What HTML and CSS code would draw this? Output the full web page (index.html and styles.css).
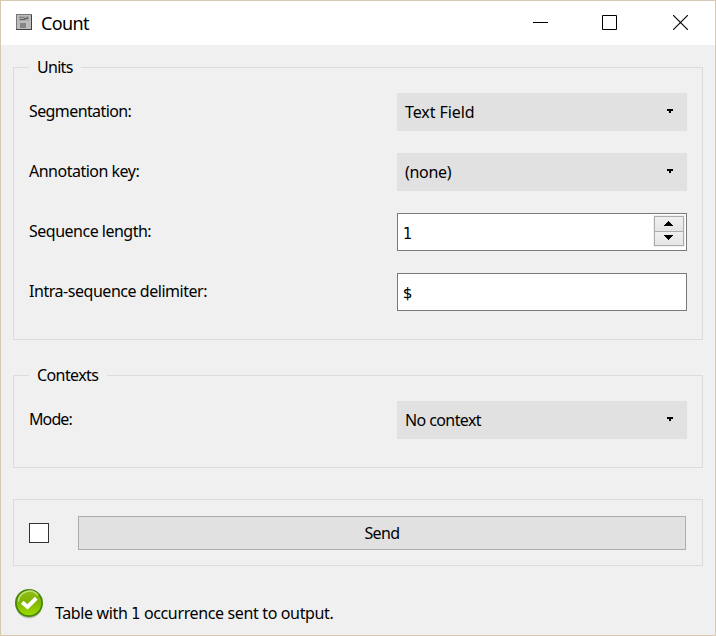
FILE: index.html
```html
<!DOCTYPE html>
<html lang="en">
<head>
<meta charset="utf-8">
<title>Count</title>
<link rel="stylesheet" href="styles.css">
</head>
<body>
<div class="window">
  <header class="titlebar">
    <svg class="app-icon" width="16" height="16" shape-rendering="crispEdges"><path fill="#414141" d="M0 0h16v16H0z"/><path fill="#777" d="M0 0h16v1H0zM0 0h1v15H0z"/><path fill="#bcbcbc" d="M1 1h14v14H1z"/><path fill="#a8a8a8" d="M3 2h10v5H3z"/><path fill="#858585" d="M4 9h6v5H4zM3 3h5v1H3z"/><path fill="#5c5c5c" d="M4 5h4V4h3V3h1v2H9v1H4z"/></svg>
    <h1 class="title">Count</h1>
    <div class="window-controls">
      <svg width="15" height="15" shape-rendering="crispEdges"><path fill="#000" d="M0 7h15v1H0z"/></svg>
      <svg width="15" height="15"><path fill="none" stroke="#000" d="M.5.5h14v14H.5z"/></svg>
      <svg width="15" height="15"><path fill="none" stroke="#000" stroke-width="1.1" d="M0 0l15 15M15 0L0 15"/></svg>
    </div>
  </header>
  <main class="content">
    <section class="group units">
      <h2 class="legend legend-units">Units</h2>
      <div class="row"><span class="label l-seg">Segmentation:</span><div class="select"><span class="v-text">Text Field</span><i class="caret"></i></div></div>
      <div class="row"><span class="label">Annotation key:</span><div class="select"><span class="v-none">(none)</span><i class="caret"></i></div></div>
      <div class="row"><span class="label">Sequence length:</span><div class="field"><span class="digit">1</span>
        <div class="spinner">
          <span class="step"><svg width="9" height="5" shape-rendering="crispEdges"><path d="M4 0h1v1h1v1h1v1h1v1h1v1H0V4h1V3h1V2h1V1h1z"/></svg></span>
          <span class="step"><svg width="9" height="5" shape-rendering="crispEdges"><path d="M0 0h9v1H8v1H7v1H6v1H5v1H4V4H3V3H2V2H1V1H0z"/></svg></span>
        </div></div></div>
      <div class="row"><span class="label l-intra">Intra-sequence delimiter:</span><div class="field"><span>$</span></div></div>
    </section>
    <section class="group contexts">
      <h2 class="legend legend-contexts">Contexts</h2>
      <div class="row"><span class="label l-mode">Mode:</span><div class="select"><span class="v-context">No context</span><i class="caret"></i></div></div>
    </section>
    <section class="group send">
      <span class="checkbox"></span>
      <button class="send-button">Send</button>
    </section>
    <footer class="status">
      <svg width="30" height="32" viewBox="0 0 30 32">
        <defs><linearGradient id="green" x2="0" y2="1"><stop offset="0" stop-color="#8fbd18"/><stop offset=".45" stop-color="#80b400"/><stop offset="1" stop-color="#9ddd00"/></linearGradient></defs>
        <ellipse cx="14" cy="18" rx="13" ry="12.5" fill="#000" opacity=".2"/>
        <circle cx="14" cy="15" r="13.1" fill="url(#green)" stroke="#458900" stroke-width="1.8"/>
        <path d="M3.4 13.8A11 11 0 0 1 23 7.3" fill="none" stroke="#c4dd83" stroke-width="1.5"/>
        <path d="M7.2 14.3l5.3 4.6 8.8-8.6" fill="none" stroke="#fff" stroke-width="4"/>
      </svg>
      <span class="status-text">Table with <span class="digit">1</span> occurrence sent to output.</span>
    </footer>
  </main>
</div>
</body>
</html>
```

FILE: styles.css
```css
* { box-sizing: border-box; }
body {
  margin: 0;
  font: 16px/20px "Noto Sans", sans-serif;
  color: #000;
}
.window {
  width: 716px;
  height: 636px;
  border: 1px solid #d9c9b3;
  border-right-color: #d4cab6;
  background: #f0f0f0;
  overflow: hidden;
}
.titlebar {
  display: flex;
  align-items: center;
  height: 44px;
  padding: 0 27px 0 15px;
  background: #fff;
}
.app-icon { margin-bottom: 2px; }
.title {
  margin: 0 0 0 9px;
  font-size: 18px;
  font-weight: 400;
  letter-spacing: -.65px;
}
.window-controls {
  display: flex;
  gap: 55px;
  margin: 0 0 1px auto;
}
.window-controls svg:first-child { margin-right: -1px; }
.window-controls svg:last-child { margin-left: 1px; }
.content { padding: 22px 12px 0; }
.group { border: 1px solid #dcdcdc; }
.units { height: 273px; padding: 0 15px; }
.contexts { height: 93px; margin-top: 35px; padding: 0 15px; }
.legend {
  width: max-content;
  height: 20px;
  margin: -11px 0 16px;
  padding: 0 8px;
  background: #f0f0f0;
  font-size: 16px;
  font-weight: 400;
  line-height: 20px;
  white-space: nowrap;
}
.legend-units { width: 52px; letter-spacing: -.7px; }
.legend-contexts { width: 78px; letter-spacing: -.6px; }
.row {
  display: grid;
  grid-template-columns: 368px 290px;
  grid-template-rows: 38px;
  height: 38px;
  margin-bottom: 22px;
  letter-spacing: -.5px;
}
.label { padding-top: 8px; white-space: nowrap; }
.select {
  display: flex;
  align-items: center;
  justify-content: space-between;
  padding: 0 14px 0 8px;
  background: #e1e1e1;
}
.caret {
  width: 6px;
  height: 4px;
  margin-bottom: 2px;
  background: linear-gradient(#000, #000) 0 0 / 6px 2px no-repeat, linear-gradient(#000, #000) 2px 2px / 2px 2px no-repeat;
}
.field {
  display: flex;
  justify-content: space-between;
  height: 38px;
  padding: 1px 1px 0 5px;
  border: 1px solid #7a7a7a;
  background: #fff;
  line-height: 37px;
}
.digit { font-family: "DejaVu Sans Condensed", "DejaVu Sans", sans-serif; }
.spinner {
  display: grid;
  grid-template-rows: 15px 15px;
  width: 32px;
  height: 32px;
  border: 1px solid #f0f0f0;
}
.step {
  display: flex;
  align-items: center;
  justify-content: center;
  border: 1px solid #acacac;
  background: linear-gradient(#f0f0f0, #e5e5e5);
}
.step:first-child { height: 16px; padding: 0 1px 2px 0; }
.step:last-child { padding: 0 1px 2px 0; }
.send {
  display: flex;
  align-items: center;
  height: 67px;
  margin-top: 31px;
  padding: 0 16px 0 15px;
}
.checkbox {
  width: 20px;
  height: 20px;
  margin-right: 29px;
  border: 1px solid #333;
  background: #fff;
}
.send-button {
  flex: 1;
  height: 34px;
  padding: 0;
  border: 1px solid #adadad;
  background: #e1e1e1;
  color: #000;
  font: inherit;
  letter-spacing: -.6px;
}
.status { display: flex; padding: 22px 0 0 2px; }
.status-text { margin: 15px 0 0 10px; letter-spacing: -.36px; white-space: nowrap; }
.l-seg { letter-spacing: -.6px; }
.l-intra { letter-spacing: -.46px; }
.l-mode { letter-spacing: -.9px; }
.v-text { letter-spacing: -.08px; }
.v-none { letter-spacing: -.3px; }
.v-context { letter-spacing: -.6px; }
```
